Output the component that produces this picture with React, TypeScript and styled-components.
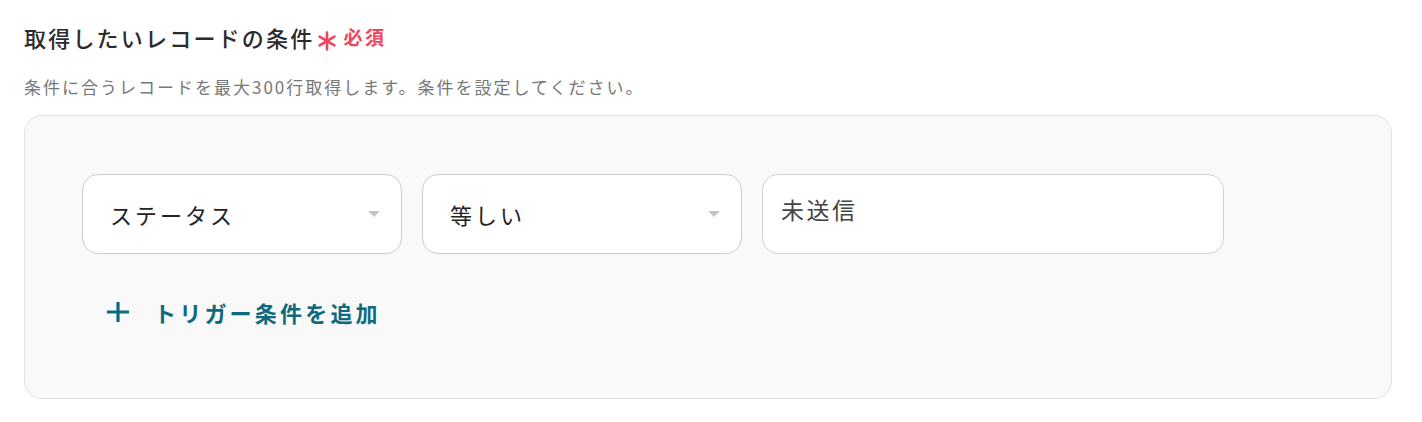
import React from "react";
import styled, { createGlobalStyle } from "styled-components";

const GlobalStyle = createGlobalStyle`
  html, body {
    margin: 0;
    padding: 0;
    background: #ffffff;
  }
  body {
    font-family: "Noto Sans CJK JP", "Noto Sans", sans-serif;
    color: #2a2a2a;
  }
`;

const Page = styled.div`
  padding: 19px 30px 24px 24px;
  box-sizing: border-box;
  width: 1422px;
`;

const TitleRow = styled.div`
  display: flex;
  align-items: center;
  height: 36px;
`;

const Title = styled.h2`
  margin: 0;
  font-size: 22px;
  line-height: 36px;
  font-weight: 500;
  letter-spacing: 2.2px;
  color: #2b2b2b;
`;

const AsteriskMark = styled.svg`
  margin-left: 4px;
  margin-top: 7px;
  flex: none;
`;

const Required = styled.span`
  color: #f0465d;
  font-size: 19px;
  font-weight: 700;
  line-height: 36px;
  letter-spacing: 2.5px;
  margin-left: 7px;
`;

const Description = styled.p`
  margin: 20px 0 0 0;
  font-size: 17px;
  line-height: 24px;
  letter-spacing: 2px;
  color: #777777;
`;

const Panel = styled.div`
  margin-top: 16px;
  width: 1368px;
  height: 284px;
  box-sizing: border-box;
  background: #f9f9f9;
  border: 1.5px solid #e2e2e2;
  border-radius: 18px;
  padding: 58px 57px;
`;

const ConditionRow = styled.div`
  display: flex;
  gap: 20px;
`;

const SelectBox = styled.div<{ $width: number }>`
  position: relative;
  width: ${(p) => p.$width}px;
  height: 80px;
  box-sizing: border-box;
  background: #ffffff;
  border: 1.5px solid #cccccc;
  border-radius: 16px;
  display: flex;
  align-items: center;
  padding: 0 27px;
  font-size: 22px;
  letter-spacing: 3px;
  color: #222222;
`;

const Caret = styled.span`
  position: absolute;
  right: 21px;
  top: 50%;
  margin-top: -3px;
  width: 0;
  height: 0;
  border-left: 6px solid transparent;
  border-right: 6px solid transparent;
  border-top: 6px solid #c4c4c4;
`;

const TextField = styled.div<{ $width: number }>`
  width: ${(p) => p.$width}px;
  height: 80px;
  box-sizing: border-box;
  background: #ffffff;
  border: 1.5px solid #cfd3d8;
  border-radius: 16px;
  padding: 17px 18px;
  font-size: 23px;
  line-height: 34px;
  letter-spacing: 2.5px;
  color: #444444;
`;

const AddButton = styled.button`
  margin-top: 42px;
  margin-left: 24px;
  display: flex;
  align-items: center;
  gap: 24px;
  border: none;
  background: transparent;
  padding: 0;
  cursor: pointer;
  font-family: inherit;
  font-size: 22px;
  font-weight: 700;
  letter-spacing: 3.2px;
  color: #0f6a80;
`;

const PlusIcon = () => (
  <svg width="24" height="24" viewBox="0 0 24 24" aria-hidden="true">
    <path d="M12 2v20M1 12h22" stroke="#0f6a80" strokeWidth="3.2" fill="none" />
  </svg>
);

const Asterisk = () => (
  <AsteriskMark width="18" height="20" viewBox="0 0 18 20" aria-hidden="true">
    <path
      d="M9 1.5v17M1.6 5.7l14.8 8.6M16.4 5.7L1.6 14.3"
      stroke="#f0465d"
      strokeWidth="2.6"
      strokeLinecap="round"
      fill="none"
    />
  </AsteriskMark>
);

export default function App() {
  return (
    <>
      <GlobalStyle />
      <Page>
        <TitleRow>
          <Title>取得したいレコードの条件</Title>
          <Asterisk />
          <Required>必須</Required>
        </TitleRow>
        <Description>
          条件に合うレコードを最大300行取得します。条件を設定してください。
        </Description>
        <Panel>
          <ConditionRow>
            <SelectBox $width={320}>
              ステータス
              <Caret />
            </SelectBox>
            <SelectBox $width={320}>
              等しい
              <Caret />
            </SelectBox>
            <TextField $width={462}>未送信</TextField>
          </ConditionRow>
          <AddButton type="button">
            <PlusIcon />
            トリガー条件を追加
          </AddButton>
        </Panel>
      </Page>
    </>
  );
}
